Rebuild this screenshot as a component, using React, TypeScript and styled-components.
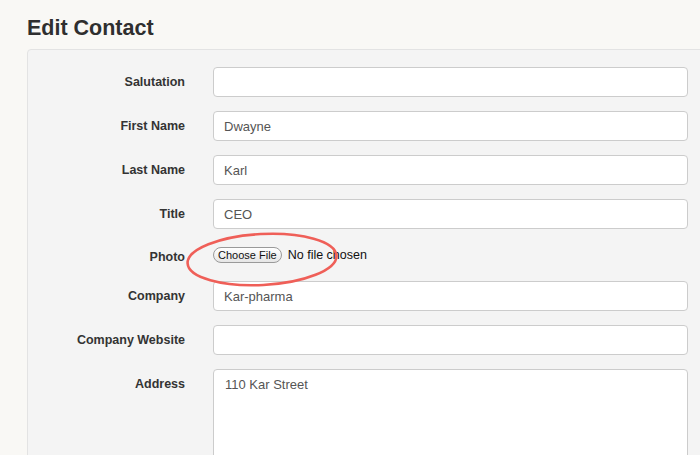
import React from "react";
import styled, { createGlobalStyle } from "styled-components";

const Global = createGlobalStyle`
  html, body { margin: 0; padding: 0; background: #f9f8f5; }
  body { font-family: "Liberation Sans", Arial, sans-serif; color: #333; }
`;

const Page = styled.div`
  width: 700px;
  height: 455px;
  overflow: hidden;
  box-sizing: border-box;
  padding: 16px 0 0 27px;
  background: #f9f8f5;
`;

const Heading = styled.h1`
  margin: 0 0 9px 0;
  font-size: 21.5px;
  line-height: 24px;
  font-weight: 700;
  color: #2f2f2f;
`;

const Panel = styled.div`
  width: 740px;
  min-height: 500px;
  box-sizing: border-box;
  background: #f4f4f4;
  border: 1px solid #e3e3e3;
  border-radius: 4px;
  padding: 17px 0 0 0;
`;

const Form = styled.form`
  display: grid;
  grid-template-columns: 157px 475px;
  column-gap: 28px;
  row-gap: 14px;
`;

const Label = styled.label<{ $padTop?: number }>`
  text-align: right;
  font-size: 12.5px;
  font-weight: 700;
  line-height: 20px;
  padding-top: ${(p) => (p.$padTop ?? 5)}px;
  color: #333;
`;

const TextInput = styled.input`
  box-sizing: border-box;
  width: 100%;
  height: 30px;
  border: 1px solid #cccccc;
  border-radius: 4px;
  background: #fff;
  padding: 0 10px;
  font-family: "Liberation Sans", Arial, sans-serif;
  font-size: 13px;
  color: #555;
  outline: none;
`;

const TextArea = styled.textarea`
  box-sizing: border-box;
  width: 100%;
  height: 110px;
  border: 1px solid #cccccc;
  border-radius: 4px;
  background: #fff;
  padding: 6px 11px;
  font-family: "Liberation Sans", Arial, sans-serif;
  font-size: 13px;
  line-height: 18px;
  color: #555;
  resize: none;
  outline: none;
`;

const FileControl = styled.div`
  position: relative;
  height: 24px;
  display: flex;
  align-items: center;
  gap: 6px;
`;

const FileButton = styled.span`
  box-sizing: border-box;
  height: 16px;
  padding: 0 4px;
  display: inline-flex;
  align-items: center;
  border: 1px solid #9a9a9a;
  border-radius: 8px;
  background: linear-gradient(#ffffff, #e6e6e6);
  font-size: 11px;
  color: #111;
  line-height: 14px;
`;

const FileText = styled.span`
  font-size: 12.5px;
  color: #111;
`;

const Annotation = styled.svg`
  position: absolute;
  left: -30px;
  top: -12px;
  width: 160px;
  height: 56px;
  overflow: visible;
  pointer-events: none;
`;

const fields: { label: string; value: string }[] = [
  { label: "Salutation", value: "" },
  { label: "First Name", value: "Dwayne" },
  { label: "Last Name", value: "Karl" },
  { label: "Title", value: "CEO" },
];

const fields2: { label: string; value: string }[] = [
  { label: "Company", value: "Kar-pharma" },
  { label: "Company Website", value: "" },
];

export default function App() {
  return (
    <>
      <Global />
      <Page>
        <Heading>Edit Contact</Heading>
        <Panel>
          <Form>
            {fields.map((f) => (
              <React.Fragment key={f.label}>
                <Label>{f.label}</Label>
                <TextInput defaultValue={f.value} />
              </React.Fragment>
            ))}
            <Label $padTop={4}>Photo</Label>
            <FileControl>
              <FileButton>Choose File</FileButton>
              <FileText>No file chosen</FileText>
              <Annotation viewBox="0 0 160 56">
                <ellipse
                  cx="79"
                  cy="28.5"
                  rx="74.5"
                  ry="25.5"
                  fill="none"
                  stroke="#ef5f58"
                  strokeWidth="2.6"
                  transform="rotate(-3 79 28.5)"
                />
              </Annotation>
            </FileControl>
            {fields2.map((f) => (
              <React.Fragment key={f.label}>
                <Label>{f.label}</Label>
                <TextInput defaultValue={f.value} />
              </React.Fragment>
            ))}
            <Label>Address</Label>
            <TextArea defaultValue="110 Kar Street" />
          </Form>
        </Panel>
      </Page>
    </>
  );
}
